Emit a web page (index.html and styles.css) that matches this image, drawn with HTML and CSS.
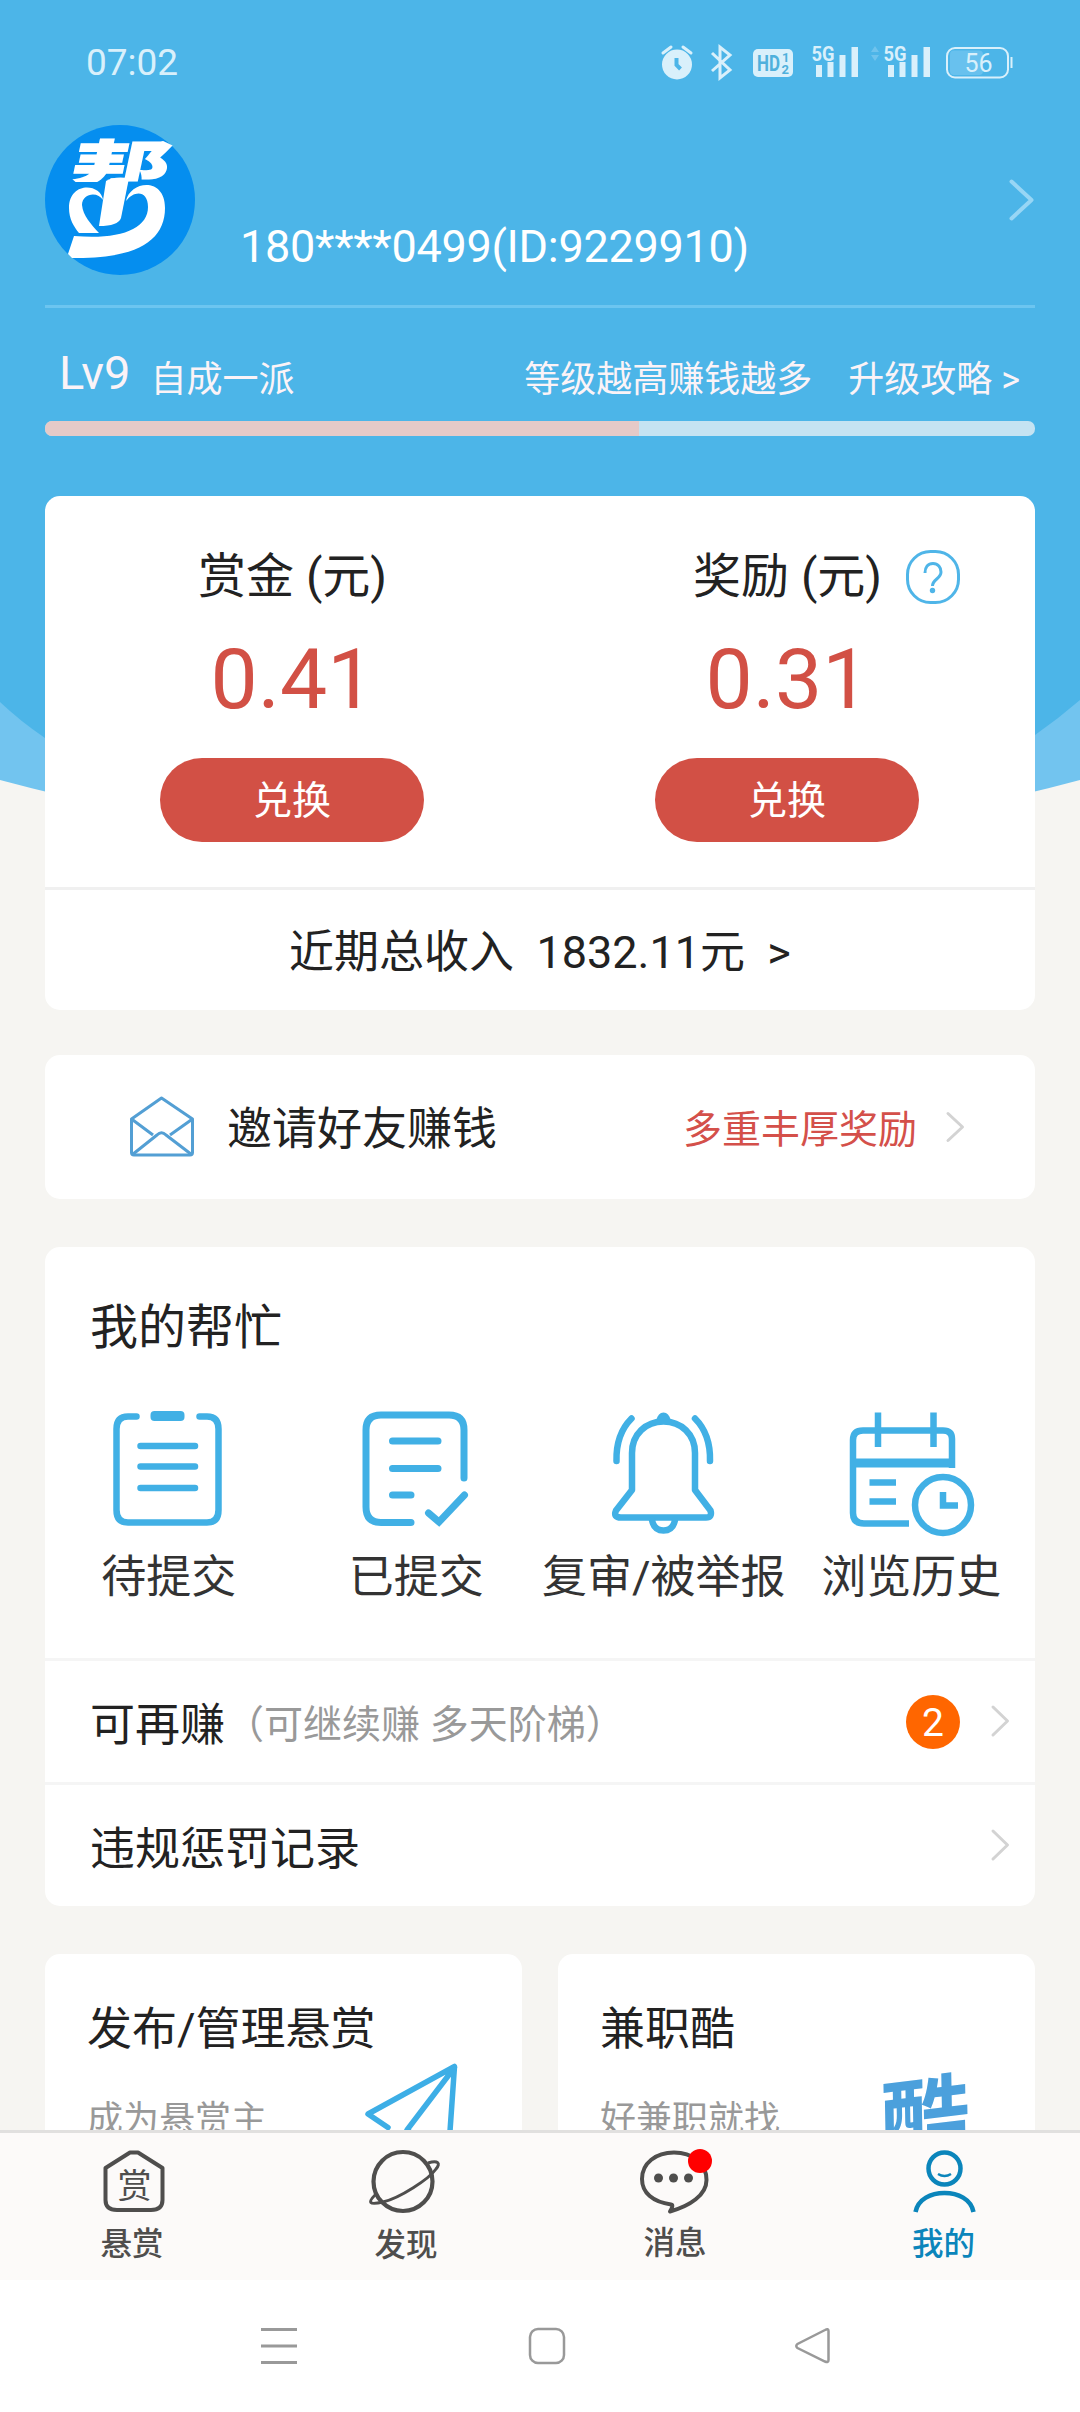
FILE: index.html
```html
<!DOCTYPE html>
<html lang="zh-CN">
<head>
<meta charset="utf-8">
<title>我的</title>
<link rel="stylesheet" href="styles.css">
</head>
<body>
<div class="screen">
  <svg class="backdrop" viewBox="0 0 1080 810" width="1080" height="810" aria-hidden="true">
    <path fill="#72c4ef" d="M0 0H1080V780Q820 850 540 850T0 780Z"/>
    <path fill="#4cb5e8" d="M0 0H1080V700Q1058 719 1035 735Q900 810 540 810T45 738Q20 721 0 702Z"/>
  </svg>

  <header class="statusbar">
    <time class="clock">07:02</time>
    <div class="indicators">
      <svg class="ind-alarm" viewBox="660 44 34 36" width="34" height="36">
        <circle cx="677" cy="64.500" r="15" fill="#d9f0fb"/>
        <path d="M663 53l8-6M683 47l8 6" stroke="#d9f0fb" stroke-width="3" fill="none" stroke-linecap="round"/>
        <path d="M676.500 58v7l4 4" stroke="#4cb5e8" stroke-width="4" fill="none"/>
      </svg>
      <svg class="ind-bt" viewBox="710 44 24 36" width="24" height="36">
        <path d="M712 53l18 17-10 8V47l10 8-18 16" fill="none" stroke="#d9f0fb" stroke-width="3"/>
      </svg>
      <svg class="ind-hd" viewBox="753 49 40 28" width="40" height="28">
        <rect x="753" y="49" width="40" height="28" rx="5" fill="#d9f0fb"/>
        <text x="757" y="71" font-size="22" font-weight="700" textLength="23" lengthAdjust="spacingAndGlyphs" fill="#4fb0dc">HD</text>
        <text x="782" y="62" font-size="13" font-weight="700" fill="#4fb0dc">1</text>
        <text x="781.500" y="74" font-size="13" font-weight="700" fill="#4fb0dc">2</text>
      </svg>
      <svg class="ind-sig" viewBox="811 44 48 34" width="48" height="34">
        <text x="811.500" y="60.500" font-size="21" font-weight="700" textLength="23" lengthAdjust="spacingAndGlyphs" fill="#d9f0fb">5G</text>
        <g fill="#d9f0fb"><rect x="816" y="65" width="6" height="12"/><rect x="827.500" y="62" width="6" height="15"/><rect x="839.500" y="55" width="6" height="22"/><rect x="851.500" y="47" width="6.500" height="30"/></g>
      </svg>
      <svg class="ind-sig2" viewBox="870 44 61 34" width="61" height="34">
        <path d="M871 52l4-6 4 6zM871 55l4 6 4-6z" fill="#6fc3ed"/>
        <text x="883.500" y="60.500" font-size="21" font-weight="700" textLength="23" lengthAdjust="spacingAndGlyphs" fill="#d9f0fb">5G</text>
        <g fill="#d9f0fb"><rect x="888" y="65" width="6" height="12"/><rect x="899.500" y="62" width="6" height="15"/><rect x="911.500" y="55" width="6" height="22"/><rect x="923.500" y="47" width="6.500" height="30"/></g>
      </svg>
      <svg class="ind-bat" viewBox="945 46 69 33" width="69" height="33">
        <rect x="950" y="50.500" width="33" height="24.500" rx="4" fill="#68c1ee"/>
        <rect x="947" y="48" width="61" height="29.500" rx="8" fill="none" stroke="#d9f0fb" stroke-width="2"/>
        <path d="M1011.500 57v11" stroke="#d9f0fb" stroke-width="2"/>
        <text x="978.500" y="71.500" font-size="25" text-anchor="middle" fill="#d9f0fb">56</text>
      </svg>
    </div>
  </header>

  <section class="profile">
    <svg class="avatar" viewBox="45 125 150 150" width="150" height="150">
      <defs><clipPath id="upper"><path d="M60 130H190V182H60Z"/></clipPath></defs>
      <circle cx="120" cy="200" r="75" fill="#058eef"/>
      <g clip-path="url(#upper)">
        <text transform="translate(63 206) skewX(-12) scale(1.08 .86)" font-size="92" font-weight="900" class="cjk" fill="#fff">帮</text>
      </g>
      <path fill="#fff" d="M106 181Q113 176 129 178L121 218Q118 226 99 226Z"/>
      <path fill="#fff" d="M103 200C101 183 69 181 69 208C69 219 74 227 79 233L99 233C91 224 83 216 82 205C82 193 98 191 103 200Z"/>
      <path fill="#fff" d="M126 201C130 181 165 176 165 208C165 240 138 259 72 258L68 254L74 236C120 240 148 229 148 207C148 190 134 190 126 201Z"/>
    </svg>
    <div class="account">180****0499(ID:9229910)</div>
    <svg class="profile-go" viewBox="1009 178 27 44" width="27" height="44"><path d="M1012.500 181.500L1032.500 200L1012.500 218.500" fill="none" stroke="#97d6f5" stroke-width="4" stroke-linecap="round" stroke-linejoin="round"/></svg>
  </section>

  <section class="level">
    <div class="level-row">
      <span class="level-name">Lv9</span>
      <span class="level-title">自成一派</span>
      <span class="level-hint">等级越高赚钱越多</span>
      <span class="level-guide">升级攻略 &gt;</span>
    </div>
    <div class="progress"><div class="progress-fill" style="width:60%"></div></div>
  </section>

  <main class="content">
    <section class="card balance">
      <div class="wallets">
        <div class="wallet">
          <div class="wallet-label">赏金 (元)</div>
          <div class="wallet-value">0.41</div>
          <button class="redeem">兑换</button>
        </div>
        <div class="wallet">
          <div class="wallet-label">奖励 (元)
            <svg class="help" viewBox="905 549 56 56" width="56" height="56">
              <rect x="907.500" y="551.500" width="51" height="51" rx="23" fill="none" stroke="#4fb5e8" stroke-width="3"/>
              <path d="M925 573c0-6 3-9.500 8-9.500s8 4 8 8.500c0 7-8.500 7-8.500 14" fill="none" stroke="#4fb5e8" stroke-width="3"/>
              <circle cx="932.500" cy="590.500" r="2.700" fill="#4fb5e8"/>
            </svg>
          </div>
          <div class="wallet-value">0.31</div>
          <button class="redeem">兑换</button>
        </div>
      </div>
      <div class="income">近期总收入&nbsp; 1832.11元&nbsp; &gt;</div>
    </section>

    <section class="card invite">
      <svg class="mail" viewBox="129 1094 66 64" width="66" height="64">
        <g fill="none" stroke="#539fd4" stroke-width="3" stroke-linejoin="round"><path d="M131.500 1114.500L161.500 1093.500L192.500 1114.500V1148Q192.500 1150.500 190 1150.500H134Q131.500 1150.500 131.500 1148Z" transform="translate(0 3.500)"/><path d="M131.500 1118L153 1134M192.500 1118L170 1134M132.500 1153.500L157 1134Q161.500 1129.500 166 1134L191.500 1153.500"/></g>
      </svg>
      <span class="invite-title">邀请好友赚钱</span>
      <span class="invite-bonus">多重丰厚奖励</span>
      <svg class="chev" viewBox="0 0 22 36" width="22" height="36"><path d="M3 4.500L17.500 18L3 31.500"/></svg>
    </section>

    <section class="card help-card">
      <h2 class="help-title">我的帮忙</h2>
      <div class="shortcuts">
        <div class="shortcut">
          <svg viewBox="109 1408 120 124" width="120" height="124"><g fill="none" stroke="#41b0e5" stroke-width="6.500" stroke-linecap="round"><path d="M136.500 1416.500H128Q116.500 1416.500 116.500 1429V1510Q116.500 1522.500 128 1522.500H207Q218.500 1522.500 218.500 1510V1429Q218.500 1416.500 207 1416.500H199.500M140.500 1446H195M140.500 1466.500H195M140.500 1488H195"/></g><rect x="150.500" y="1411" width="34" height="10" rx="4" fill="#41b0e5"/></svg>
          <span>待提交</span>
        </div>
        <div class="shortcut">
          <svg viewBox="356 1408 120 124" width="120" height="124"><path d="M464 1478V1430Q464 1415 449 1415H381Q366 1415 366 1430V1507Q366 1522.500 381 1522.500H411M392.500 1441H438M392.500 1468.500H438M392.500 1495H411M428.500 1513L439 1522L464.500 1495" fill="none" stroke="#41b0e5" stroke-width="7" stroke-linecap="round"/></svg>
          <span>已提交</span>
        </div>
        <div class="shortcut">
          <svg viewBox="604 1408 120 128" width="120" height="128"><g fill="none" stroke="#41b0e5" stroke-width="6.500" stroke-linecap="round" stroke-linejoin="round"><path d="M616.500 1461C616 1441 622 1428 631.500 1418.500M710 1461C710.500 1441 704.500 1428 695 1418.500"/><path d="M632 1490V1453C632 1434 646 1421.500 663.500 1421.500S695 1434 695 1453V1490L710.500 1510.500Q712.500 1517.500 706 1517.500H621Q613 1517.500 616 1510.500Z"/><path d="M652 1520Q654 1530.500 663.500 1530.500T675 1520"/></g><path d="M656.500 1420Q658 1412.500 663.500 1412.500T670.500 1420Z" fill="#41b0e5"/></svg>
          <span>复审/被举报</span>
        </div>
        <div class="shortcut">
          <svg viewBox="846 1408 130 130" width="130" height="130"><g fill="none" stroke="#41b0e5" stroke-width="6.500"><path d="M878 1412.500V1447M933.500 1412.500V1447M869.500 1482.500H896M869.500 1501.500H896"/><path d="M909 1523.500H864Q853 1523.500 853 1513V1440Q853 1430.500 863 1430.500H943Q952 1430.500 952 1439V1468"/><path d="M853 1463H955" stroke-width="9"/><circle cx="943" cy="1505" r="28"/><path d="M943 1492V1505.500H958"/></g></svg>
          <span>浏览历史</span>
        </div>
      </div>
      <div class="line-item">
        <span class="item-name">可再赚</span><span class="item-note">（可继续赚 多天阶梯）</span>
        <span class="count">2</span>
        <svg class="chev" viewBox="0 0 22 36" width="22" height="36"><path d="M3 4L17.500 18L3 32"/></svg>
      </div>
      <div class="line-item">
        <span class="item-name">违规惩罚记录</span>
        <svg class="chev chev-end" viewBox="0 0 22 36" width="22" height="36"><path d="M3 4L17.500 18L3 32"/></svg>
      </div>
    </section>

    <div class="tiles">
      <section class="card tile">
        <div><h3 class="tile-title">发布/管理悬赏</h3><p class="tile-note">成为悬赏主</p></div>
        <svg class="plane" viewBox="360 2060 104 104" width="104" height="104"><path d="M388 2127.500L368 2114L454.500 2066.500L448 2160L407 2130L454.500 2067.500" fill="none" stroke="#3daee6" stroke-width="5.500" stroke-linecap="round" stroke-linejoin="round"/></svg>
      </section>
      <section class="card tile">
        <div><h3 class="tile-title">兼职酷</h3><p class="tile-note">好兼职就找</p></div>
        <svg class="cool" viewBox="870 2060 110 104" width="110" height="104"><text class="cjk" transform="translate(878 2158) rotate(-7) skewX(-6)" font-size="90" font-weight="700" fill="#4ba0dc">酷</text></svg>
      </section>
    </div>
  </main>

  <nav class="tabs">
    <div class="tab">
      <svg viewBox="95 2145 80 74" width="80" height="74"><path d="M130 2152.500H138L162.500 2168V2200Q162.500 2210 151 2210H117Q105.500 2210 105.500 2200V2168Z" fill="none" stroke="#4f4e4d" stroke-width="4" stroke-linejoin="round"/><text class="cjk" x="134.500" y="2198" font-size="34" text-anchor="middle" fill="#4f4e4d">赏</text></svg>
      <span class="tab-name tab-reward">悬赏</span>
    </div>
    <div class="tab">
      <svg viewBox="365 2145 80 74" width="80" height="74"><g fill="none" stroke="#4f4e4d"><circle cx="403" cy="2181.500" r="29.500" stroke-width="4.200"/><path d="M428 2163C438 2160 441 2163 436 2169C429 2179 400 2198 383 2202C369 2205 367 2203 376 2194" stroke-width="3"/></g></svg>
      <span class="tab-name tab-discover">发现</span>
    </div>
    <div class="tab">
      <svg viewBox="635 2145 80 74" width="80" height="74"><path d="M670 2211.500C690 2206 706.500 2195 706.500 2180C706.500 2163 692 2152.500 674 2152.500S642 2163 642 2179C642 2193 653 2202 671 2204.500Q674 2205 670 2211.500Z" fill="none" stroke="#4f4e4d" stroke-width="4" stroke-linejoin="round"/><g fill="#4f4e4d"><circle cx="658.500" cy="2178" r="4.500"/><circle cx="673.500" cy="2178" r="4.500"/><circle cx="688.500" cy="2178" r="4.500"/></g><circle cx="700" cy="2161" r="12" fill="#f00"/></svg>
      <span class="tab-name tab-message">消息</span>
    </div>
    <div class="tab tab-active">
      <svg viewBox="905 2145 80 74" width="80" height="74"><g fill="none" stroke="#0b85bb" stroke-width="4.500"><circle cx="944.500" cy="2168.500" r="16"/><path d="M915.500 2212C918 2199 931 2193 944.500 2193S971 2199 973.500 2212"/><path d="M938 2174Q944.500 2178 951 2174" stroke-width="2.500"/></g></svg>
      <span class="tab-name tab-mine">我的</span>
    </div>
  </nav>

  <footer class="sysnav">
    <svg viewBox="260 2326 40 40" width="40" height="40"><path d="M261 2329.500H297M261 2346H297M261 2362.500H297"/></svg>
    <svg viewBox="527 2326 40 40" width="40" height="40"><rect x="530" y="2329" width="34" height="34" rx="8" stroke-width="2.500"/></svg>
    <svg viewBox="793 2326 40 40" width="40" height="40"><path d="M828.500 2331V2360Q828.500 2363 825 2361.500L797.500 2348Q795 2346 797.500 2344L825 2330Q828.500 2328 828.500 2331Z" stroke-width="2.500"/></svg>
  </footer>
</div>
</body>
</html>
```

FILE: styles.css
```css
* { box-sizing: border-box; }

body {
  margin: 0;
  background: #fff;
  font-family: Roboto, "Noto Sans CJK SC", sans-serif;
  color: #222;
}

svg { display: block; flex: none; }
h2, h3, p { margin: 0; font-weight: 400; }
.cjk { font-family: "Noto Sans CJK SC", sans-serif; }

.screen {
  position: relative;
  isolation: isolate;
  display: flex;
  flex-direction: column;
  width: 1080px;
  height: 2412px;
  overflow: hidden;
  background: #f6f5f2;
}

.backdrop { position: absolute; top: 0; left: 0; z-index: -1; }

/* Status bar */
.statusbar {
  display: flex;
  flex: none;
  justify-content: space-between;
  height: 125px;
  padding: 42px 66px 0 86px;
}
.clock { font-size: 37px; line-height: 42px; color: #d9f0fb; }
.indicators { display: flex; align-items: flex-start; }
.ind-alarm, .ind-bt, .ind-sig, .ind-sig2 { margin-top: 2px; }
.indicators svg { overflow: visible; }
.ind-bt { margin-left: 16px; }
.ind-hd { margin-top: 7px; margin-left: 19px; }
.ind-sig { margin-left: 18px; }
.ind-sig2 { margin-left: 11px; }
.ind-bat { margin-top: 4px; margin-left: 14px; }

/* Profile */
.profile {
  display: flex;
  flex: none;
  align-items: center;
  height: 183px;
  margin: 0 45px;
  padding-bottom: 30px;
  border-bottom: 3px solid #6cc5f0;
  color: #fff;
}
.account {
  flex: 1;
  margin: 94px 0 0 45px;
  font-size: 45px;
  line-height: 54px;
  letter-spacing: -0.28px;
}

/* Level */
.level { flex: none; height: 188px; padding: 0 45px; color: #fbf3f7; }
.level-row { display: flex; align-items: baseline; height: 113px; padding: 38px 15px 0 14px; font-size: 36px; line-height: 54px; }
.level-name { font-size: 47px; }
.level-title { margin-left: 20px; }
.level-hint { margin-left: auto; }
.level-guide { margin-left: 36px; }
.level-title, .level-hint, .level-guide { padding-top: 6px; align-self: flex-start; line-height: 57px; }
.progress { height: 15px; border-radius: 7px; overflow: hidden; background: #c5e3f2; }
.progress-fill { height: 100%; background: #e5cac8; }

/* Cards */
.content { display: flex; flex: none; flex-direction: column; height: 1634px; padding: 0 45px; overflow: hidden; }
.card { flex: none; border-radius: 15px; background: #fff; }

.balance { height: 514px; margin-bottom: 45px; }
.wallets { display: grid; grid-template-columns: 1fr 1fr; height: 394px; padding-top: 51px; border-bottom: 3px solid #f0f0f0; }
.wallet { display: flex; flex-direction: column; align-items: center; }
.wallet-label { position: relative; font-size: 48px; line-height: 60px; }
.help { position: absolute; top: 2px; right: -79px; }
.wallet-value { margin-top: 25px; font-size: 84px; line-height: 96px; color: #d25045; }
.redeem {
  width: 264px;
  height: 84px;
  margin: 30px 1px 0 0;
  padding: 2px 0 0;
  border: 0;
  border-radius: 42px;
  background: #d25045;
  color: #fff;
  font: 39px/82px Roboto, "Noto Sans CJK SC", sans-serif;
}
.income { font-size: 45px; line-height: 125px; text-align: center; }

.invite { display: flex; align-items: center; height: 144px; margin-bottom: 48px; padding: 0 68px 0 84px; }
.invite-title { margin-left: 32px; font-size: 45px; line-height: 60px; }
.invite-bonus { margin-left: auto; font-size: 39px; line-height: 60px; color: #d4504a; }
.invite-title, .invite-bonus { padding-top: 5px; }
.chev { margin-left: 28px; fill: none; stroke: #d3d3d3; stroke-width: 3; stroke-linecap: round; stroke-linejoin: round; }

.help-card { height: 659px; margin-bottom: 48px; }
.help-title { padding: 51px 0 0 45px; font-size: 48px; line-height: 60px; }
.shortcuts { display: grid; grid-template-columns: repeat(4, 1fr); height: 300px; padding-top: 50px; }
.shortcut { display: flex; flex-direction: column; align-items: center; height: 200px; font-size: 45px; color: #333; white-space: nowrap; }
.shortcut span { margin-top: auto; line-height: 60px; }
.line-item { display: flex; align-items: center; height: 124px; padding: 0 23px 0 45px; border-top: 3px solid #f5f5f5; }
.item-name { font-size: 45px; }
.item-note { padding-bottom: 2px; font-size: 39px; color: #999; }
.count { width: 54px; height: 54px; margin-left: auto; border-radius: 50%; background: #f60; color: #fff; font-size: 39px; line-height: 57px; text-align: center; }
.line-item .chev { margin: -1px 0 0 30px; }
.line-item .chev-end { margin-left: auto; }

.tiles { display: grid; grid-template-columns: repeat(2, minmax(0, 1fr)); gap: 36px; }
.tile { display: flex; height: 250px; padding: 46px 0 0 42px; white-space: nowrap; }
.tile > div { width: 273px; }
.tile-title { font-size: 45px; line-height: 60px; }
.tile-note { margin-top: 30px; font-size: 36px; line-height: 60px; color: #999; }
.plane, .cool { margin-top: 60px; }

/* Bottom navigation */
.tabs { display: grid; flex: none; grid-template-columns: repeat(4, 1fr); height: 150px; border-top: 3px solid #e1e0df; background: #fcfaf9; }
.tab { display: flex; flex-direction: column; align-items: center; padding-top: 12px; color: #4f4e4d; }
.tab-name { margin-top: 8px; font-size: 31.5px; font-weight: 500; line-height: 36px; }
.tab-reward { padding-right: 6px; }
.tab-discover { margin-top: 9px; padding-left: 2px; }
.tab-message { margin-top: 7px; }
.tab-mine { padding-right: 3px; }
.tab-active { color: #0b85bb; }

.sysnav { display: flex; flex: none; align-items: center; justify-content: space-between; height: 132px; padding: 0 247px 0 260px; background: #fff; }
.sysnav svg { fill: none; stroke: #999; stroke-width: 3; }
```
